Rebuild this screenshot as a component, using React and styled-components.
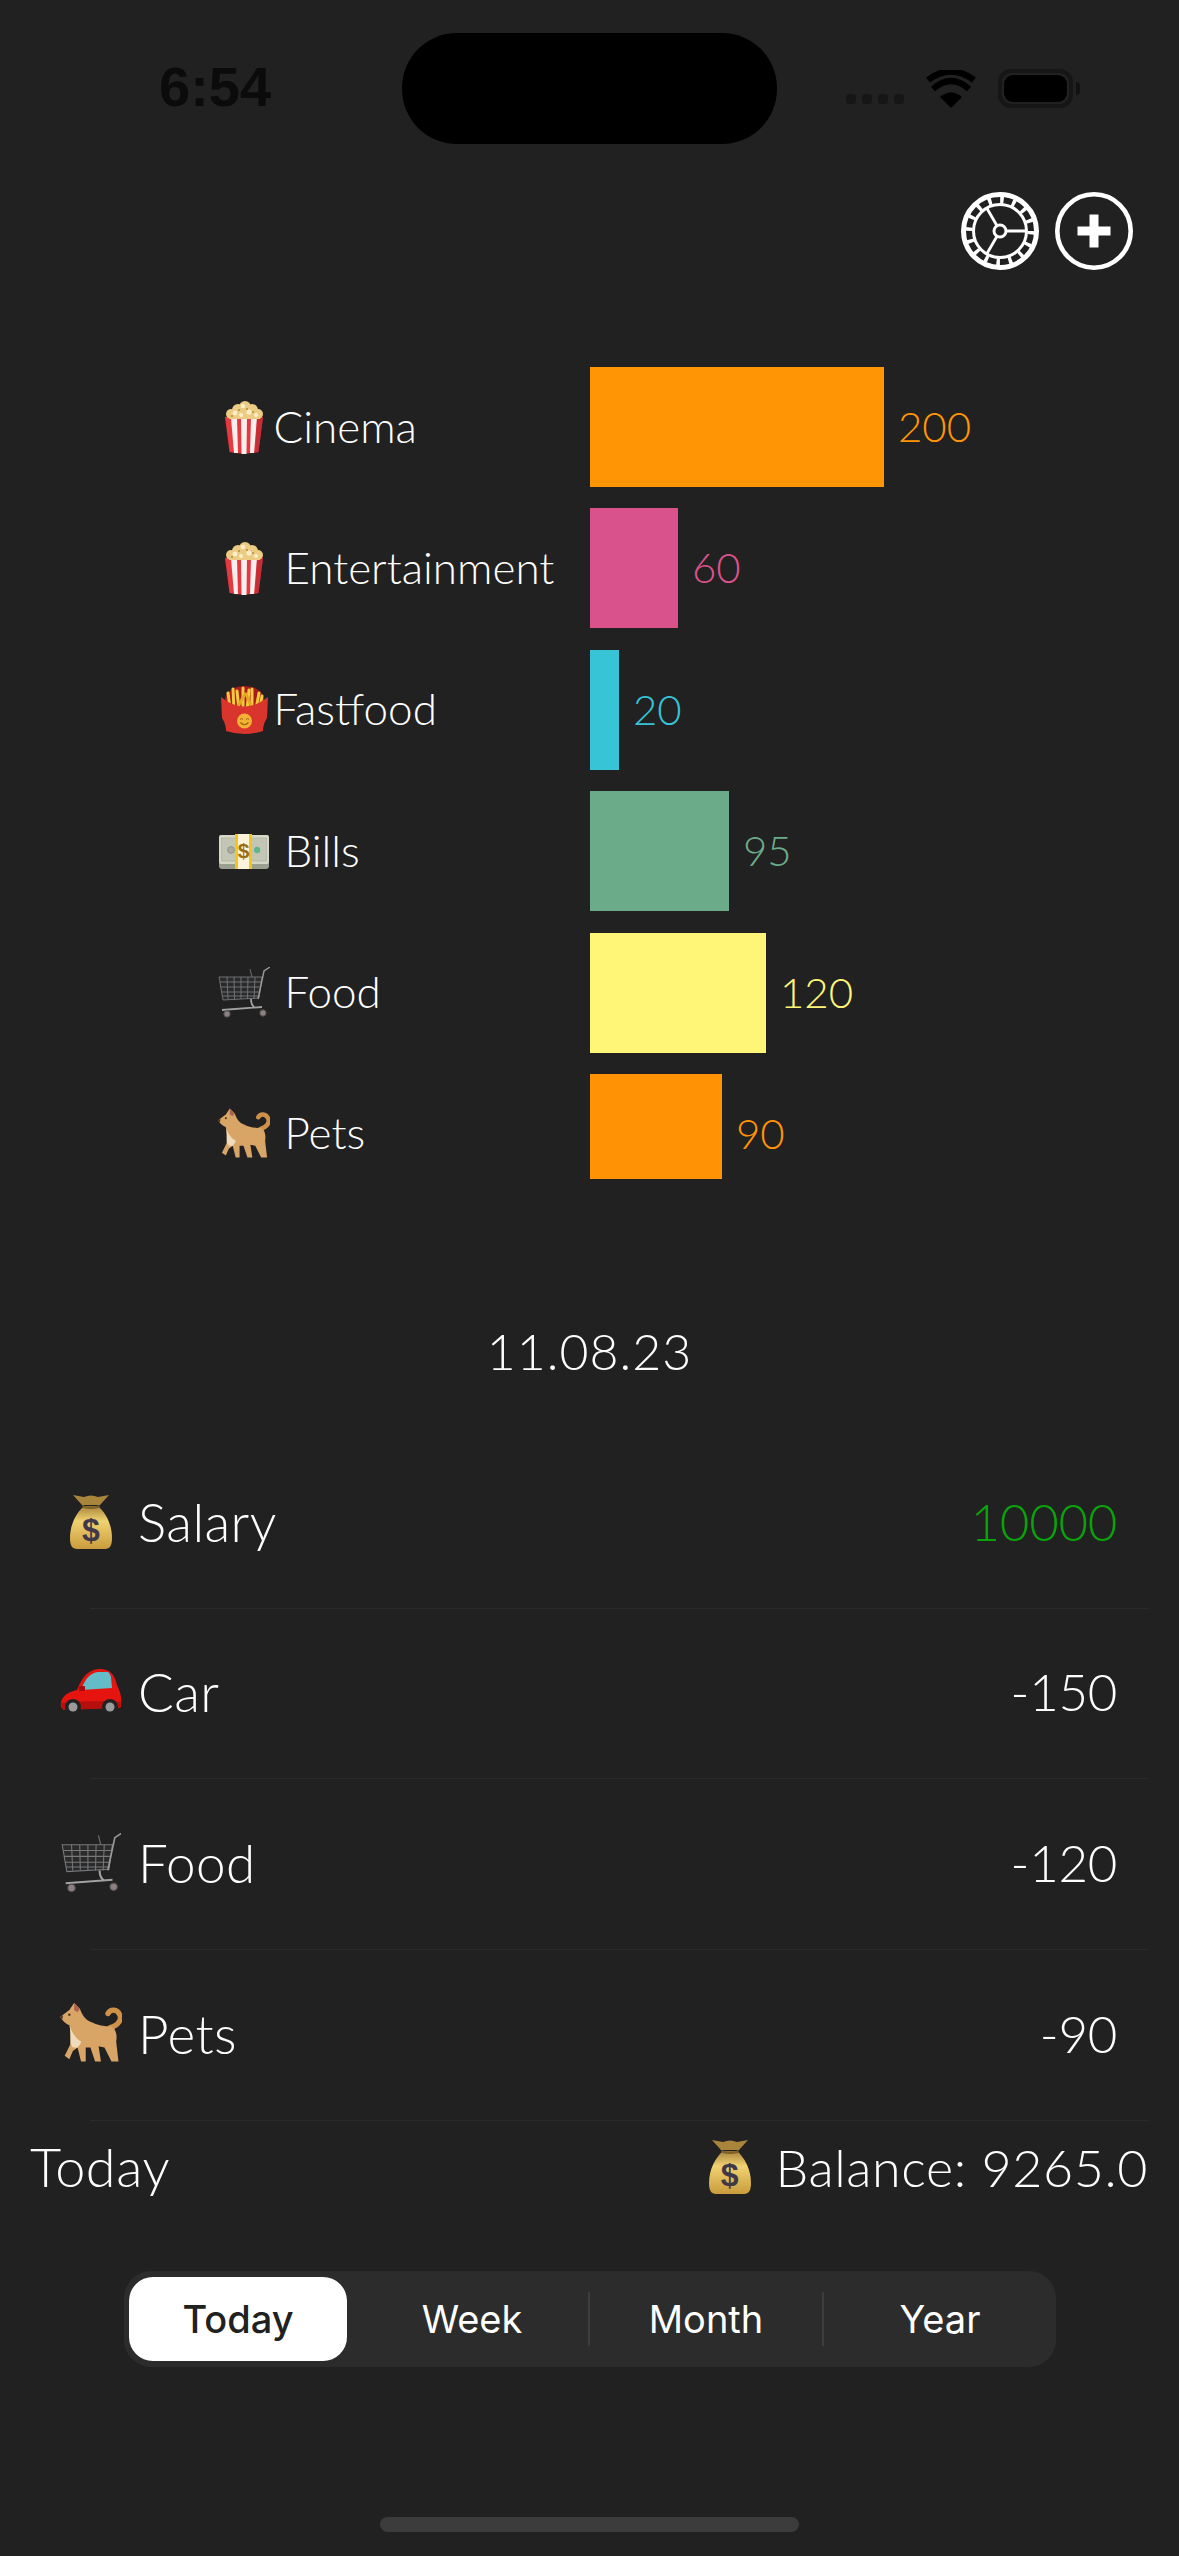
import React from "react";
import styled, { createGlobalStyle } from "styled-components";

const Global = createGlobalStyle`
  html, body { margin: 0; padding: 0; background: #212121; }
  * { box-sizing: border-box; }
`;

const Page = styled.div`
  width: 1179px;
  height: 2556px;
  overflow: hidden;
  background: #212121;
  color: #fff;
  font-family: "Lato", "Noto Sans", sans-serif;
  font-weight: 300;
  display: flex;
  flex-direction: column;
`;

/* status bar */
const StatusBar = styled.div`
  display: flex;
  align-items: center;
  height: 111px;
  margin-top: 33px;
`;
const ClockCell = styled.div`
  width: 402px;
  padding: 0 0 3px 159px;
`;
const Clock = styled.span`
  font: 700 56px/1 "Liberation Sans", sans-serif;
  color: #0b0b0b;
`;
const Island = styled.div`
  width: 375px;
  height: 111px;
  border-radius: 55px;
  background: #000;
`;
const StatusIcons = styled.div`
  display: flex;
  align-items: center;
  padding-left: 69px;
`;
const Dots = styled.div`
  display: flex;
  gap: 6px;
  margin: 20px 22px 0 0;
`;
const Dot = styled.i`
  width: 10px;
  height: 10px;
  border-radius: 3px;
  background: #161616;
`;
const Battery = styled.div`
  width: 75px;
  height: 39px;
  margin-left: 22px;
  border: 4px solid #161616;
  border-radius: 13px;
  padding: 2px;
`;
const BatteryFill = styled.div`
  height: 100%;
  border-radius: 9px;
  background: #000;
`;
const BatteryNub = styled.i`
  width: 4px;
  height: 13px;
  margin-left: 3px;
  border-radius: 0 6px 6px 0;
  background: #111;
`;

/* toolbar */
const Toolbar = styled.div`
  display: flex;
  justify-content: flex-end;
  gap: 16px;
  margin-top: 48px;
  padding-right: 46px;
`;
const IconButton = styled.svg`
  width: 78px;
  height: 78px;
  display: block;
`;

/* chart */
const Chart = styled.div`
  display: flex;
  flex-direction: column;
  gap: 21.4px;
  margin-top: 97px;
  padding-left: 218px;
`;
const ChartRow = styled.div`
  display: flex;
  align-items: center;
  height: 120px;
`;
const ChartLabel = styled.div`
  display: flex;
  align-items: center;
  width: 372px;
  font-size: 44px;
`;
const EmojiSlot = styled.div`
  display: flex;
  justify-content: center;
  align-items: center;
  flex: none;
  width: ${(p) => p.$w}px;
`;
const ChartName = styled.span`
  margin-left: ${(p) => (p.$tight ? 3.5 : 14.5)}px;
  padding-bottom: 3px;
`;
const Bar = styled.div`
  align-self: flex-start;
  width: ${(p) => p.$w}px;
  height: ${(p) => p.$h}px;
  background: ${(p) => p.$c};
`;
const BarValue = styled.span`
  margin-left: 14px;
  padding-bottom: 2px;
  font-size: 42px;
  color: ${(p) => p.$c};
`;

const DateLine = styled.div`
  margin-top: 127px;
  text-align: center;
  font-size: 50px;
  line-height: 60px;
  letter-spacing: 1px;
`;

/* list */
const List = styled.div`
  margin-top: 57px;
`;
const ListRow = styled.div`
  display: flex;
  align-items: center;
  height: 169.7px;
  padding: 0 62px 3px 60px;
`;
const RowName = styled.span`
  flex: 1;
  margin-left: 16px;
  font-size: 53px;
  letter-spacing: 0.4px;
`;
const RowValue = styled.span`
  font-size: 51px;
  letter-spacing: -0.3px;
  color: ${(p) => p.$c || "#fff"};
`;
const Separator = styled.div`
  height: 1px;
  margin: 0 30px 0 90px;
  background: #2b2b2b;
`;

/* footer */
const Footer = styled.div`
  display: flex;
  align-items: center;
  justify-content: space-between;
  height: 96px;
  padding: 0 31px 4px 30px;
`;
const TodayLabel = styled.span`
  font-size: 54px;
  letter-spacing: 0.6px;
`;
const BalanceGroup = styled.div`
  display: flex;
  align-items: center;
  gap: 24px;
  font-size: 52px;
  letter-spacing: 0.6px;
`;

/* segmented control */
const Segmented = styled.div`
  display: flex;
  align-items: center;
  width: 932px;
  height: 96px;
  margin: 54px 0 0 124px;
  border-radius: 27px;
  background: #2c2c2c;
  font-family: "Inter", sans-serif;
  font-size: 38px;
  font-weight: 400;
`;
const Segment = styled.div`
  flex: 1 1 0;
  text-align: center;
  line-height: 84px;
`;
const SelectedSegment = styled.div`
  flex: 1 1 0;
  display: flex;
  height: 84px;
`;
const SelectedPill = styled.div`
  flex: 1;
  margin: 0 9px 0 5px;
  border-radius: 24px;
  background: #fff;
  color: #212121;
  font-weight: 500;
  text-align: center;
  line-height: 84px;
`;
const SegmentDivider = styled.i`
  width: 2px;
  height: 54px;
  background: #3d3d3d;
`;

const HomeIndicator = styled.div`
  width: 419px;
  height: 15px;
  margin: 150px auto 0;
  border-radius: 8px;
  background: #3c3c3c;
`;

/* drawn emoji */
const EmojiSvg = styled.svg`
  display: block;
  width: ${(p) => p.$w}px;
  height: ${(p) => p.$h}px;
`;

const Popcorn = ({ scale = 1 }) => (
  <EmojiSvg viewBox="0 0 40 53" $w={40 * scale} $h={53 * scale}>
    <path d="M1 16 L39 16 L34.5 51 Q20 54 5.5 51 Z" fill="#e6383f" />
    <path d="M7 17 L13 17 L14 52 L10 52 Z M17 17 L23 17 L22.5 53 L17.5 53 Z M27 17 L33 17 L30 52 L26 52 Z" fill="#f7eeee" />
    <path d="M33 17 L39 16 L34.5 51 L31 52 Z" fill="#b3262e" opacity=".6" />
    <g fill="#eccb82">
      <circle cx="7" cy="13" r="5" />
      <circle cx="14" cy="9" r="6" />
      <circle cx="21" cy="6" r="6" />
      <circle cx="28" cy="9" r="6" />
      <circle cx="34" cy="13" r="5" />
      <rect x="5" y="10" width="31" height="8" />
    </g>
    <g fill="#fbefc9">
      <circle cx="11" cy="12" r="2.4" />
      <circle cx="19" cy="5" r="2.2" />
      <circle cx="25" cy="11" r="2.6" />
      <circle cx="32" cy="14" r="2" />
      <circle cx="17" cy="14" r="2" />
    </g>
    <g fill="#b98a3c">
      <circle cx="15" cy="9" r="1" />
      <circle cx="23" cy="8" r="1" />
      <circle cx="29" cy="11" r="1" />
      <circle cx="8" cy="15" r="1" />
    </g>
  </EmojiSvg>
);

const Fries = () => (
  <EmojiSvg viewBox="0 0 47 51" $w={47} $h={51}>
    <path d="M4 14 C8 -2 39 -2 43 14 L43 26 L4 26 Z" fill="#a81c1c" />
    <g stroke="#f7c93c" strokeWidth="3" strokeLinecap="round">
      <path d="M9 24 L7 9" />
      <path d="M13 26 L12 5" />
      <path d="M18 26 L16 7" />
      <path d="M22 26 L22 4" />
      <path d="M26 26 L28 6" />
      <path d="M31 26 L31 5" />
      <path d="M35 25 L38 9" />
      <path d="M39 23 L41 12" />
      <path d="M15 26 L24 10" stroke="#e5a823" />
      <path d="M32 26 L25 10" stroke="#e5a823" />
    </g>
    <path d="M0 13 Q23 32 47 13 L46 34 Q42 40 42 47 Q23 53 5 47 Q5 40 1 34 Z" fill="#d9352d" />
    <circle cx="23.5" cy="37" r="7.5" fill="#f2b233" />
    <path d="M19.5 38.5 Q23.5 43 27.5 38.5" stroke="#9a5d12" strokeWidth="1.2" fill="none" />
    <path d="M19 35.5 Q20.5 33.5 22 35.5 M25 35.5 Q26.5 33.5 28 35.5" stroke="#9a5d12" strokeWidth="1" fill="none" />
  </EmojiSvg>
);

const EmojiDollar = styled.text`
  font-family: "Liberation Sans", sans-serif;
  font-weight: 700;
`;

const Money = () => (
  <EmojiSvg viewBox="0 0 52 35" $w={52} $h={35}>
    <path d="M1 5 Q1 1 4 1 L48 1 Q51 1 51 5 L51 32 Q51 35 48 35 L4 35 Q1 35 1 32 Z" fill="#9b9f90" />
    <rect x="1" y="1" width="50" height="29" rx="2" fill="#d6d8c6" />
    <rect x="3.5" y="4" width="45" height="23" fill="#c3c6b4" stroke="#b0b3a1" strokeWidth=".7" />
    <circle cx="13" cy="16" r="3.4" fill="#a9ab9c" stroke="#8d8f83" strokeWidth=".8" />
    <circle cx="39" cy="16" r="3.2" fill="#62b48f" />
    <rect x="17" y="0" width="17" height="35" fill="#f5c518" />
    <rect x="20" y="0" width="11" height="35" fill="#fbf3dc" />
    <EmojiDollar x="25.5" y="24" fontSize="21" textAnchor="middle" fill="#9a6d10">$</EmojiDollar>
  </EmojiSvg>
);

const Cart = ({ scale = 1 }) => (
  <EmojiSvg viewBox="0 0 52 51" $w={52 * scale} $h={51 * scale}>
    <g stroke="#77787a" strokeWidth=".9" fill="none">
      <path d="M1 10 L44 10 L41 31 L5 33 Z" fill="#2a2a2a" />
      <path d="M2 15 L43 15 M2.500 20 L42.500 20 M3.500 25 L42 25 M4.500 29 L41.500 29" />
      <path d="M9 10 L10 32 M16 10 L16.500 32 M23 10 L23 32 M30 10 L29.500 32 M37 10 L36 32" />
    </g>
    <path d="M40 32 L46 4 L52 0" stroke="#9a9a9a" strokeWidth="1.4" fill="none" />
    <path d="M32 2 L34 10" stroke="#6f6f6f" strokeWidth="1" />
    <path d="M4 43 L44 40 M33 32 Q33 38 37 41" stroke="#a2a2a2" strokeWidth="1.8" fill="none" />
    <circle cx="9" cy="47" r="3.2" fill="#8c8080" stroke="#4f4a4a" />
    <circle cx="45" cy="46" r="3.2" fill="#8c8080" stroke="#4f4a4a" />
  </EmojiSvg>
);

const Dog = ({ scale = 1 }) => (
  <EmojiSvg viewBox="0 0 53 52" $w={53 * scale} $h={52 * scale}>
    <path d="M43 21 C50 19 53 14 51 10 C49 5 43 5 41 9" fill="none" stroke="#cf9048" strokeWidth="4.500" strokeLinecap="round" />
    <path d="M0 12 L8 6 L12 0 L17 5 C19 10 21 14 26 16 C32 19 38 20 44 20 C48 22 49 28 48 33 L50 50 L44 50 L38 38 L33 37 L35 50 L30 50 L26 38 L22 38 L22 50 L18 50 L15 38 L11 41 L8 48 L4 45 L9 35 C9 28 9 22 8 19 C5 18 2 15 0 12 Z" fill="#d8a566" />
    <path d="M8 19 C10 25 13 30 18 33 C18 35 16 37 15 38 L11 38 L9 35 C9 28 9 22 8 19 Z" fill="#f0dcbb" />
    <path d="M12 0 L17 5 L15 8 L12 6 Z" fill="#b0614e" />
    <circle cx="8" cy="10" r="1" fill="#3b2a1b" />
    <path d="M0 12 L2.500 10.500 L2 14 Z" fill="#3b2a1b" />
  </EmojiSvg>
);

const Bag = ({ scale = 1 }) => (
  <EmojiSvg viewBox="0 0 42 57" $w={42 * scale} $h={57 * scale}>
    <defs>
      <linearGradient id="bagGold" x1="0" y1="0" x2="0" y2="1">
        <stop offset="0" stopColor="#a9843b" />
        <stop offset=".35" stopColor="#f0d272" />
        <stop offset="1" stopColor="#c99c3c" />
      </linearGradient>
    </defs>
    <path d="M3 2 L14 4 Q21 1 28 4 L39 2 L30 12 L12 12 Z" fill="#a9843b" />
    <path d="M14 13 C6 20 0 32 0 45 C0 54 3 56 8 56 L34 56 C39 56 42 54 42 45 C42 32 36 20 28 13 Z" fill="url(#bagGold)" />
    <path d="M12 12 Q21 15 30 12 L29 15 Q21 17 13 15 Z" fill="#7e6128" />
    <EmojiDollar x="21" y="48" fontSize="32" textAnchor="middle" fill="#3e3848">$</EmojiDollar>
  </EmojiSvg>
);

const Car = () => (
  <EmojiSvg viewBox="0 0 62 46" $w={62} $h={46}>
    <path d="M1 38 C0 30 4 24 17 21 C22 8 28 1 38 0 C47 0 54 2 57 16 C61 24 62 30 61 38 L59 39 L3 40 Z" fill="#e5140f" />
    <path d="M21 21 C25 10 30 4 38 3 L47 3 C49 3 50 5 51 8 L52 19 Q36 20 21 21 Z" fill="#63bcc8" />
    <path d="M1 34 C20 32 42 32 61 33 L60 39 L3 41 Z" fill="#b60f0c" />
    <rect x="19" y="17" width="6" height="5" rx="1" fill="#a30c0a" />
    <circle cx="13" cy="38" r="8" fill="#222" />
    <circle cx="13" cy="38" r="4.5" fill="#9b9b9b" />
    <circle cx="50" cy="38" r="8" fill="#222" />
    <circle cx="50" cy="38" r="4.5" fill="#9b9b9b" />
  </EmojiSvg>
);

const GearIcon = () => (
  <IconButton viewBox="0 0 78 78">
    <g fill="none" stroke="#fff">
      <circle cx="39" cy="39" r="36.500" strokeWidth="5" />
      <circle cx="39" cy="39" r="26.500" strokeWidth="3" />
      <circle cx="39" cy="39" r="31" strokeWidth="7" strokeDasharray="3.500 8.670" />
      <circle cx="39" cy="39" r="6" strokeWidth="3" />
      <path d="M45 39 H65 M36 33.800 L26 16.500 M36 44.200 L26 61.500" strokeWidth="2.800" />
    </g>
  </IconButton>
);

const PlusIcon = () => (
  <IconButton viewBox="0 0 78 78">
    <circle cx="39" cy="39" r="36.700" fill="none" stroke="#fff" strokeWidth="4.600" />
    <path d="M34.500 22.500 H43.500 V34.500 H55.500 V43.500 H43.500 V55.500 H34.500 V43.500 H22.500 V34.500 H34.500 Z" fill="#fff" />
  </IconButton>
);

const WifiIcon = styled.svg`
  display: block;
  width: 50px;
  height: 38px;
`;

const chartData = [
  { emoji: <Popcorn />, name: "Cinema", tight: true, w: 294, value: 200, c: "#ff9505" },
  { emoji: <Popcorn />, name: "Entertainment", w: 88, value: 60, c: "#da528b" },
  { emoji: <Fries />, name: "Fastfood", tight: true, w: 29, value: 20, c: "#36c4d6" },
  { emoji: <Money />, name: "Bills", w: 139, value: 95, c: "#6cab89" },
  { emoji: <Cart />, name: "Food", w: 176, value: 120, c: "#fff677" },
  { emoji: <Dog />, name: "Pets", w: 132, h: 105, value: 90, c: "#ff9305" },
];

const listData = [
  { emoji: <Bag />, name: "Salary", value: "10000", c: "#0ba30b" },
  { emoji: <Car />, name: "Car", value: "-150" },
  { emoji: <Cart scale={1.17} />, name: "Food", value: "-120" },
  { emoji: <Dog scale={1.17} />, name: "Pets", value: "-90" },
];

export default function App() {
  return (
    <Page>
      <Global />
      <StatusBar>
        <ClockCell>
          <Clock>6:54</Clock>
        </ClockCell>
        <Island />
        <StatusIcons>
          <Dots>
            <Dot />
            <Dot />
            <Dot />
            <Dot />
          </Dots>
          <WifiIcon viewBox="0 0 50 38">
            <path d="M25 38 L14 27 Q25 18 36 27 Z" fill="#000" />
            <path d="M7 19 Q25 3 43 19" fill="none" stroke="#000" strokeWidth="6" />
            <path d="M2 10 Q25 -7 48 10" fill="none" stroke="#000" strokeWidth="6.500" />
          </WifiIcon>
          <Battery>
            <BatteryFill />
          </Battery>
          <BatteryNub />
        </StatusIcons>
      </StatusBar>

      <Toolbar>
        <GearIcon />
        <PlusIcon />
      </Toolbar>

      <Chart>
        {chartData.map((r) => (
          <ChartRow key={r.name}>
            <ChartLabel>
              <EmojiSlot $w={52}>{r.emoji}</EmojiSlot>
              <ChartName $tight={r.tight}>{r.name}</ChartName>
            </ChartLabel>
            <Bar $w={r.w} $h={r.h || 120} $c={r.c} />
            <BarValue $c={r.c}>{r.value}</BarValue>
          </ChartRow>
        ))}
      </Chart>

      <DateLine>11.08.23</DateLine>

      <List>
        {listData.map((r) => (
          <React.Fragment key={r.name}>
            <ListRow>
              <EmojiSlot $w={62}>{r.emoji}</EmojiSlot>
              <RowName>{r.name}</RowName>
              <RowValue $c={r.c}>{r.value}</RowValue>
            </ListRow>
            <Separator />
          </React.Fragment>
        ))}
      </List>

      <Footer>
        <TodayLabel>Today</TodayLabel>
        <BalanceGroup>
          <Bag />
          <span>Balance: 9265.0</span>
        </BalanceGroup>
      </Footer>

      <Segmented>
        <SelectedSegment>
          <SelectedPill>Today</SelectedPill>
        </SelectedSegment>
        <Segment>Week</Segment>
        <SegmentDivider />
        <Segment>Month</Segment>
        <SegmentDivider />
        <Segment>Year</Segment>
      </Segmented>

      <HomeIndicator />
    </Page>
  );
}
